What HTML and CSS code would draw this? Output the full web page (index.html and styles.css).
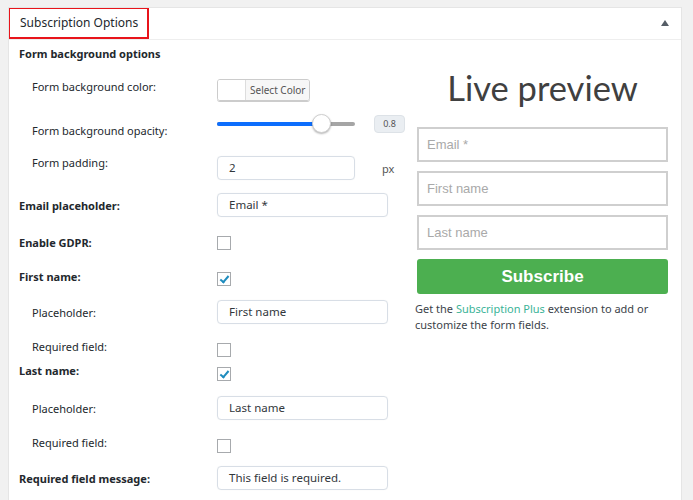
FILE: index.html
```html
<!DOCTYPE html>
<html>
<head>
<meta charset="utf-8">
<link rel="stylesheet" href="styles.css">
</head>
<body>
<div class="panel">
  <div class="panel-head">
    <h2 class="panel-title">Subscription Options</h2>
    <span class="toggle"></span>
  </div>
  <div class="panel-body">
    <div class="settings">
      <div class="section-title">Form background options</div>
      <div class="row r-color">
        <div class="label sub">Form background color:</div>
        <div class="color-btn"><span class="swatch"></span><span class="color-label">Select Color</span></div>
      </div>
      <div class="row r-opacity">
        <div class="label sub lbl-low">Form background opacity:</div>
        <div class="slider"><div class="track"><div class="fill"></div><div class="thumb"></div></div></div>
        <div class="range-val">0.8</div>
      </div>
      <div class="row r-padding">
        <div class="label sub lbl-high">Form padding:</div>
        <div class="text-input narrow">2</div>
        <span class="unit">px</span>
      </div>
      <div class="row r-email">
        <div class="label bold">Email placeholder:</div>
        <div class="text-input">Email *</div>
      </div>
      <div class="row r-gdpr">
        <div class="label bold">Enable GDPR:</div>
        <span class="check"></span>
      </div>
      <div class="row r-first">
        <div class="label bold">First name:</div>
        <span class="check checked"></span>
      </div>
      <div class="row r-ph">
        <div class="label sub">Placeholder:</div>
        <div class="text-input">First name</div>
      </div>
      <div class="row r-req">
        <div class="label sub">Required field:</div>
        <span class="check"></span>
      </div>
      <div class="row r-last">
        <div class="label bold">Last name:</div>
        <span class="check checked"></span>
      </div>
      <div class="row r-ph">
        <div class="label sub">Placeholder:</div>
        <div class="text-input">Last name</div>
      </div>
      <div class="row r-req">
        <div class="label sub">Required field:</div>
        <span class="check"></span>
      </div>
      <div class="row r-msg">
        <div class="label bold">Required field message:</div>
        <div class="text-input">This field is required.</div>
      </div>
    </div>
    <div class="preview">
      <h1 class="preview-title">Live preview</h1>
      <div class="p-input">Email *</div>
      <div class="p-input">First name</div>
      <div class="p-input">Last name</div>
      <div class="p-button">Subscribe</div>
      <p class="p-note">Get the <span class="link">Subscription Plus</span> extension to add or customize the form fields.</p>
    </div>
  </div>
</div>
</body>
</html>
```

FILE: styles.css
```css
* { box-sizing: border-box; }
html, body { margin: 0; padding: 0; }
body {
  background: #f1f1f1;
  padding: 7px 11px 0 8px;
  font-family: "Noto Sans", "Open Sans", sans-serif;
  font-size: 11px;
  color: #23282d;
}
.panel {
  background: #fff;
  border: 1px solid #e5e5e5;
  border-bottom: none;
  height: 493px;
  overflow: hidden;
}
.panel-head {
  height: 32px;
  border-bottom: 1px solid #eeeeee;
  display: flex;
  align-items: center;
  padding: 0 12px 0 10px;
  position: relative;
}
.panel-title {
  margin: 0;
  font-size: 12px;
  font-weight: 400;
  color: #23282d;
  position: absolute;
  left: -1px;
  top: -1px;
  height: 32px;
  width: 141px;
  border: 2px solid #e8141b;
  line-height: 28px;
  padding-left: 10px;
  white-space: nowrap;
}
.toggle {
  margin-left: auto;
  width: 0; height: 0;
  border-left: 4px solid transparent;
  border-right: 4px solid transparent;
  border-bottom: 6px solid #555d66;
  margin-top: -2px;
}
.panel-body {
  display: flex;
  padding: 0 12px 0 10px;
}
.settings {
  width: 389px;
  flex: none;
}
.section-title {
  font-weight: 700;
  height: 27px;
  line-height: 27px;
  color: #23282d;
}
.row {
  display: flex;
  align-items: center;
}
.label {
  width: 198px;
  flex: none;
  color: #23282d;
  position: relative;
}
.label.sub { padding-left: 13px; }
.label.bold { font-weight: 700; }
.lbl-low { top: 1px; }
.lbl-high { top: -4px; }

.r-color { height: 41px; margin-top: 2px; }
.r-color .label { top: -3px; }
.r-opacity { height: 39px; }
.r-padding { height: 34px; }
.r-email { height: 44px; }
.r-gdpr { height: 31px; }
.r-first { height: 36px; }
.r-first .label { top: 0; }
.r-ph { height: 36px; }
.r-req { height: 33px; }
.r-req .label { top: 0; }
.r-last { height: 27px; }
.r-last .label { top: -6px; }
.r-msg { height: 38px; }

.color-btn {
  display: flex;
  height: 22px;
  border: 1px solid #ccc;
  border-radius: 3px;
  box-shadow: 0 1px 0 #ccc;
  overflow: hidden;
}
.swatch {
  width: 28px;
  background: #fff;
  border-right: 1px solid #ddd;
}
.color-label {
  background: #f7f7f7;
  color: #555;
  font-size: 10px;
  padding: 0 3px 0 4px;
  line-height: 20px;
}
.slider {
  width: 140px;
  height: 20px;
  display: flex;
  align-items: center;
  position: relative;
  top: -6px;
}
.track {
  width: 138px;
  height: 4px;
  background: #a5a5a5;
  border-radius: 2px;
  position: relative;
}
.fill {
  width: 105px;
  height: 4px;
  background: #0d6efd;
  border-radius: 2px;
}
.thumb {
  position: absolute;
  left: 95px;
  top: -8px;
  width: 19px;
  height: 19px;
  border-radius: 50%;
  background: #fff;
  border: 1px solid #d0d0d0;
  box-shadow: 0 1px 2px rgba(0,0,0,0.3);
}
.range-val {
  margin-left: 17px;
  width: 31px;
  height: 18px;
  border-radius: 4px;
  background: #eaeef2;
  border: 1px solid #dde2e7;
  font-size: 9px;
  color: #555;
  text-align: center;
  line-height: 16px;
  position: relative;
  top: -6px;
}
.text-input {
  width: 171px;
  height: 24px;
  border: 1px solid #d8dee6;
  border-radius: 4px;
  box-shadow: 0 0 1px rgba(0,0,0,0.08);
  padding-left: 11px;
  line-height: 22px;
  color: #32373c;
  font-size: 11.5px;
}
.text-input.narrow { width: 138px; position: relative; top: 2px; }
.unit {
  margin-left: 27px;
  color: #555;
  font-size: 11px;
  position: relative;
  top: 2px;
}
.check {
  width: 14px;
  height: 14px;
  border: 1px solid #a7aaad;
  background: #fff;
  display: inline-block;
  position: relative;
}
.r-first .check { top: 3px; }
.r-last .check { top: -3px; }
.r-req .check { top: 3px; }
.check.checked::after {
  content: "";
  position: absolute;
  left: 4px;
  top: 1px;
  width: 3px;
  height: 7px;
  border-right: 2px solid #1e8cbe;
  border-bottom: 2px solid #1e8cbe;
  transform: rotate(40deg);
}

.preview {
  margin-left: 9px;
  width: 251px;
  flex: none;
}
.preview-title {
  margin: 28px 0 0;
  height: 59px;
  font-family: "Lato", sans-serif;
  font-weight: 400;
  font-size: 34.5px;
  line-height: 40px;
  color: #404040;
  text-align: center;
}
.p-input {
  height: 35px;
  border: 2px solid #cfcfcf;
  margin-bottom: 9px;
  padding-left: 8px;
  line-height: 31px;
  font-family: "Liberation Sans", Arial, sans-serif;
  font-size: 13px;
  color: #a9a9a9;
}
.p-input + .p-input { margin-top: 1px; margin-bottom: 9px; }
.p-button {
  height: 35px;
  margin-top: 1px;
  background: #4caf50;
  border-radius: 3px;
  color: #fff;
  font-family: "Liberation Sans", Arial, sans-serif;
  font-weight: 700;
  font-size: 17px;
  text-align: center;
  line-height: 35px;
}
.p-note {
  margin: 7px 0 0 -2px;
  font-size: 11px;
  line-height: 16px;
  color: #3c434a;
}
.link { color: #3ab397; }
```
